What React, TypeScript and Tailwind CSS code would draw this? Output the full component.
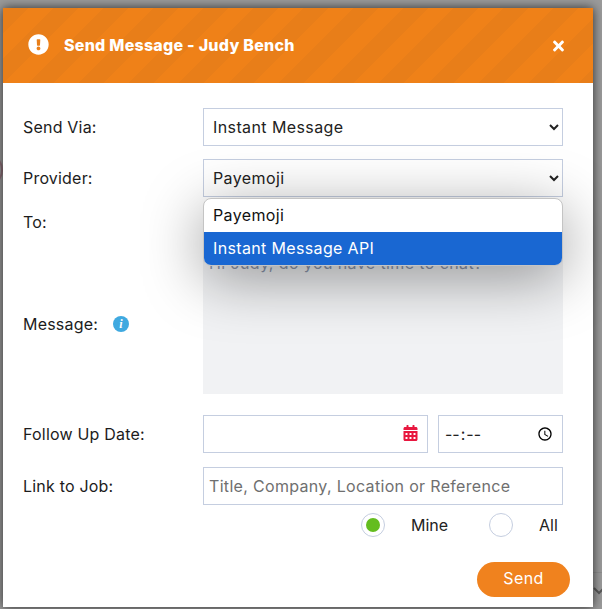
export default function App() {
  const label = "text-[16px] tracking-[0.2px] text-[#1c1c1c] leading-none";
  const control = "h-[38px] border border-[#c5cee0] bg-white text-[16px] tracking-[0.4px] text-[#222]";
  return (
    <div className="relative h-[609px] w-[602px] overflow-hidden bg-[#9b9b9b] pl-[3px] pt-[8px] font-['Inter','Liberation_Sans',sans-serif]">
      <div className="absolute left-[-33px] top-[152px] h-[36px] w-[36px] rounded-full border-2 border-[#8f6f78]" />
      <div className="absolute left-[593px] top-[572px] h-px w-[9px] bg-[#8f8f8f]" />
      <svg width="12" height="8" viewBox="0 0 12 8" fill="none" stroke="#5a5a5a" strokeWidth="2" className="absolute left-[593px] top-[587px]">
        <path d="M1 1l5 5 5-5" />
      </svg>
      <div className="relative flex h-[599px] w-[590px] flex-col bg-white shadow-[0_0_10px_rgba(0,0,0,0.7)]">
        <header className="flex h-[75px] items-center bg-[repeating-linear-gradient(135deg,#e87e19_0,#e87e19_17.68px,#ef8118_17.68px,#ef8118_35.36px)] pb-[2px] pl-[25px] pr-[28px]">
          <svg width="21" height="21" viewBox="0 0 512 512" fill="white" className="mr-[15px]">
            <path d="M504 256c0 137-111 248-248 248S8 393 8 256 119 8 256 8s248 111 248 248zm-248 50c-25.400 0-46 20.600-46 46s20.600 46 46 46 46-20.600 46-46-20.600-46-46-46zm-43.700-165.300 7.400 136c.3 6.400 5.600 11.300 12 11.300h48.500c6.400 0 11.600-5 12-11.300l7.400-136c.4-6.900-5.100-12.700-12-12.700h-63.400c-6.900 0-12.400 5.800-12 12.700z" />
          </svg>
          <h1 className="text-[16px] font-extrabold tracking-[0.25px] text-white">Send Message - Judy Bench</h1>
          <svg width="13" height="16" viewBox="0 0 352 512" fill="white" className="ml-auto mt-[3px]">
            <path d="M242.720 256l100.070-100.070c12.280-12.280 12.280-32.190 0-44.480l-22.240-22.240c-12.280-12.280-32.190-12.280-44.480 0L176 189.280 75.930 89.210c-12.280-12.280-32.190-12.280-44.480 0L9.210 111.450c-12.280 12.280-12.280 32.190 0 44.480L109.280 256 9.210 356.070c-12.280 12.280-12.280 32.190 0 44.480l22.240 22.240c12.280 12.280 32.200 12.280 44.480 0L176 322.720l100.070 100.070c12.280 12.280 32.200 12.280 44.480 0l22.240-22.240c12.280-12.280 12.280-32.190 0-44.480L242.720 256z" />
          </svg>
        </header>
        <main className="flex flex-1 flex-col pl-[20px] pr-[30px] pt-[25px]">
          <div className="flex items-center">
            <label className={`${label} w-[180px]`}>Send Via:</label>
            <select className={`${control} w-[360px] pl-[5px]`}>
              <option>Instant Message</option>
            </select>
          </div>
          <div className="mt-[13px] flex items-center">
            <label className={`${label} w-[180px]`}>Provider:</label>
            <select className={`${control} w-[360px] pl-[5px]`}>
              <option>Payemoji</option>
            </select>
          </div>
          <div className="flex h-[50px] items-center">
            <label className={label}>To:</label>
          </div>
          <div className="flex">
            <div className="flex h-[147px] w-[180px] items-center pt-[6px]">
              <label className={label}>Message:</label>
              <span className="ml-[15px] flex h-4 w-4 items-center justify-center rounded-full bg-[#3fa9e0] font-['Liberation_Serif',serif] text-[12px] font-bold italic leading-none text-white">i</span>
            </div>
            <div className="h-[147px] w-[360px] bg-[#f1f2f4] px-[6px] pt-[4px] text-[16px] tracking-[0.4px] text-[#8d97ad]">Hi Judy, do you have time to chat?</div>
          </div>
          <div className="mt-[21px] flex items-center">
            <label className={`${label} w-[180px]`}>Follow Up Date:</label>
            <div className={`${control} flex w-[225px] items-center justify-end pb-[2px] pr-[9px]`}>
              <svg width="15" height="16" viewBox="0 0 448 512" fill="#e8173f">
                <path d="M0 464c0 26.500 21.500 48 48 48h352c26.500 0 48-21.500 48-48V192H0v272zm320-196c0-6.600 5.400-12 12-12h40c6.600 0 12 5.400 12 12v40c0 6.600-5.400 12-12 12h-40c-6.600 0-12-5.400-12-12v-40zm0 128c0-6.600 5.400-12 12-12h40c6.600 0 12 5.400 12 12v40c0 6.600-5.400 12-12 12h-40c-6.600 0-12-5.400-12-12v-40zM192 268c0-6.600 5.400-12 12-12h40c6.600 0 12 5.400 12 12v40c0 6.600-5.400 12-12 12h-40c-6.600 0-12-5.400-12-12v-40zm0 128c0-6.600 5.400-12 12-12h40c6.600 0 12 5.400 12 12v40c0 6.600-5.400 12-12 12h-40c-6.600 0-12-5.400-12-12v-40zM64 268c0-6.600 5.400-12 12-12h40c6.600 0 12 5.400 12 12v40c0 6.600-5.400 12-12 12H76c-6.600 0-12-5.400-12-12v-40zm0 128c0-6.600 5.400-12 12-12h40c6.600 0 12 5.400 12 12v40c0 6.600-5.400 12-12 12H76c-6.600 0-12-5.400-12-12v-40zM400 64h-48V16c0-8.800-7.200-16-16-16h-32c-8.800 0-16 7.200-16 16v48H160V16c0-8.800-7.200-16-16-16h-32c-8.800 0-16 7.200-16 16v48H48C21.500 64 0 85.500 0 112v48h448v-48c0-26.500-21.500-48-48-48z" />
              </svg>
            </div>
            <input type="time" className={`${control} ml-[10px] w-[125px] px-[5px] text-[15px] tracking-normal [&::-webkit-datetime-edit-ampm-field]:hidden`} />
          </div>
          <div className="mt-[14px] flex items-center">
            <label className={`${label} w-[180px]`}>Link to Job:</label>
            <input placeholder="Title, Company, Location or Reference" className={`${control} w-[360px] px-[5px] text-[15px] tracking-[0.32px] placeholder:text-[#6f6f6f]`} />
          </div>
          <div className="mt-[8px] flex items-center text-[16px] text-[#222]">
            <span className="ml-[338px] flex h-[24px] w-[24px] items-center justify-center rounded-full border border-[#c5cee0]">
              <span className="h-[14px] w-[14px] rounded-full bg-[#64bd1f]" />
            </span>
            <span className="ml-[26px] w-[78px]">Mine</span>
            <span className="h-[24px] w-[24px] rounded-full border border-[#c5cee0]" />
            <span className="ml-[26px]">All</span>
          </div>
          <div className="mt-[25px] flex justify-end">
            <button className="-mr-[7px] h-[35px] w-[93px] rounded-full bg-[#f0821e] pb-[3px] text-[16px] tracking-[0.4px] text-white">Send</button>
          </div>
        </main>
      </div>
      <div className="absolute left-[203px] top-[198px] w-[360px] overflow-hidden rounded-[8px] border border-[#c4c4c4] bg-white text-[16px] tracking-[0.35px] shadow-[0_12px_60px_rgba(0,0,0,0.4)]">
        <div className="flex h-[33px] items-center pb-[2px] pl-[9px] text-[#111]">Payemoji</div>
        <div className="flex h-[33px] items-center bg-[#1967d2] pb-[2px] pl-[9px] text-white">Instant Message API</div>
      </div>
    </div>
  );
}
